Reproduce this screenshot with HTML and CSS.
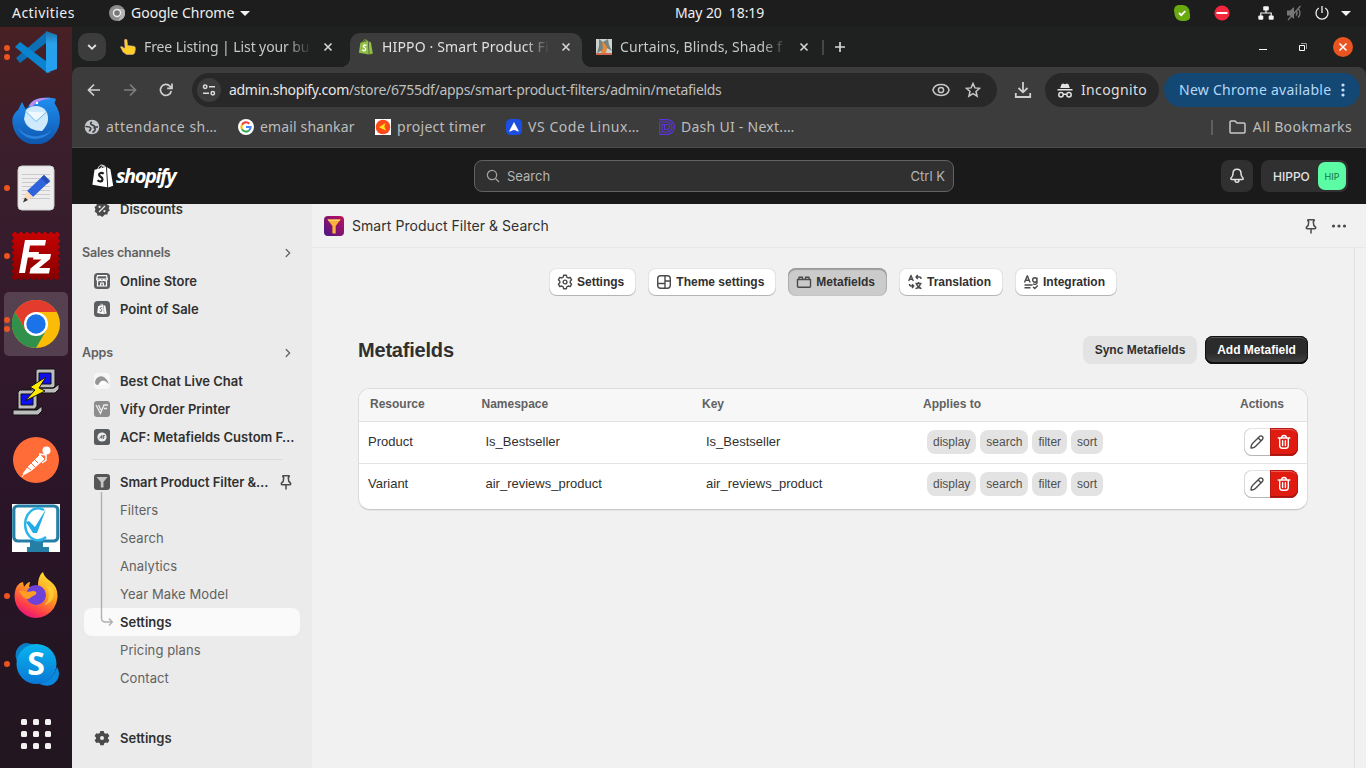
FILE: index.html
```html
<!DOCTYPE html>
<html lang="en">
<head>
<meta charset="utf-8">
<title>HIPPO · Smart Product Filter</title>
<link rel="stylesheet" href="styles.css">
</head>
<body>
<svg class="defs" aria-hidden="true">
  <defs>
    <linearGradient id="gvs" x1="0" y1="0" x2="0" y2="1"><stop offset="0" stop-color="#1c6ea6"/><stop offset=".3" stop-color="#2aa2ea"/><stop offset="1" stop-color="#24a0f0"/></linearGradient>
    <linearGradient id="gtb" x1="0" y1="0" x2="0" y2="1"><stop offset="0" stop-color="#1f8ff0"/><stop offset="1" stop-color="#0e56ae"/></linearGradient>
    <linearGradient id="gff" x1=".8" y1="0" x2=".3" y2="1"><stop offset="0" stop-color="#ffe83a"/><stop offset=".45" stop-color="#ff9a1f"/><stop offset=".8" stop-color="#ff3b4c"/><stop offset="1" stop-color="#e3127f"/></linearGradient>
    <linearGradient id="gsk" x1="0" y1="0" x2="0" y2="1"><stop offset="0" stop-color="#08b4ee"/><stop offset="1" stop-color="#0a78d6"/></linearGradient>
    <linearGradient id="gfl" x1="0" y1="1" x2="1" y2="0"><stop offset="0" stop-color="#4a1585"/><stop offset="1" stop-color="#c1125c"/></linearGradient>
    <linearGradient id="gfz" x1="0" y1="0" x2="0" y2="1"><stop offset="0" stop-color="#c60202"/><stop offset="1" stop-color="#850000"/></linearGradient>
    <symbol id="pin" viewBox="0 0 16 16"><path d="M5.200 1.700h5.600c.5 0 .6.5.4.8l-.9 1.300.5 3.600 1.700 1.700c.5.7.2 1.700-.8 1.700H4.300c-1 0-1.300-1-.8-1.700l1.700-1.700.5-3.600-.9-1.300c-.2-.4 0-.8.4-.8zM8 11v4" fill="none" stroke="currentColor" stroke-width="1.500" stroke-linejoin="round" stroke-linecap="round"/></symbol>
    <symbol id="chev" viewBox="0 0 10 10"><path d="M3.200 1.500L6.700 5 3.200 8.500" fill="none" stroke="currentColor" stroke-width="1.200" stroke-linecap="round" stroke-linejoin="round"/></symbol>
    <symbol id="x" viewBox="0 0 10 10"><path d="M1.500 1.500l7 7M8.500 1.500l-7 7" stroke="currentColor" stroke-width="1.600"/></symbol>
    <symbol id="bag" viewBox="0 0 22 24"><path d="M2.500 5.800L14 3l1.300 20.300L.4 20.800z" fill="currentColor"/><path d="M15 3.300l3.400 2 2.800 16.400-5 1.700z" fill="currentColor"/><path d="M5.400 7.200C5.800 3.500 7.800.9 9.800 1c1.700 0 2.500 2 2.600 4.500M8.400 6c.4-2.700 1.700-4.400 3.400-4.200 1 .1 1.800 1 2 2" fill="none" stroke="currentColor" stroke-width="1"/><path d="M11.700 9.600c-2-1.200-4.700-.8-4.600 1.200.1 2 3.500 2 3.400 4.600-.1 2.400-3 2.700-5 .9" fill="none" stroke="var(--bag-letter,#1a1a1a)" stroke-width="2.200"/></symbol>
    <symbol id="pencil" viewBox="0 0 16 16"><path d="M2 14c-.1-1.700.3-3.200 1.500-4.400l7-7a2 2 0 0 1 2.900 2.900l-7 7C5.200 13.700 3.700 14.100 2 14zM9.200 4l2.800 2.800" fill="none" stroke="#4a4a4a" stroke-width="1.400" stroke-linejoin="round"/></symbol>
    <symbol id="trash" viewBox="0 0 16 16"><path d="M2.200 4h11.600M5.600 3.800C5.600 2.300 6.600 1.500 8 1.500s2.400.8 2.400 2.300M3.700 4.200v7.300c0 1.700.9 2.700 2.600 2.700h3.400c1.700 0 2.600-1 2.600-2.700V4.200M6.600 6.700v4.800M9.400 6.700v4.800" fill="none" stroke="#fff" stroke-width="1.400" stroke-linecap="round"/></symbol>
  </defs>
</svg>

<header class="topbar">
  <span class="tb-act">Activities</span>
  <svg class="tb-chrome" width="16" height="16" viewBox="0 0 16 16"><circle cx="8" cy="8" r="8" fill="#8d8d8d"/><path d="M8 4h7A8 8 0 0 1 9 16l3-6" fill="#b5b5b5"/><circle cx="8" cy="8" r="3.500" fill="#777" stroke="#eee" stroke-width="1.400"/></svg>
  <span class="tb-app">Google Chrome</span>
  <i class="caret"></i>
  <span class="tb-clock">May 20&nbsp; 18:19</span>
  <div class="tb-tray">
    <svg width="16" height="16" viewBox="0 0 16 16"><path d="M5 0h4a7 7 0 0 1 6.500 8 5 5 0 0 1-4 8H8A7.500 7.500 0 0 1 .5 8C-1 4 1 0 5 0z" fill="#67a90f"/><path d="M5 8l2.300 2.200L11.300 6" fill="none" stroke="#fff" stroke-width="1.800"/></svg>
    <svg width="16" height="16" viewBox="0 0 16 16"><circle cx="8" cy="8" r="7.600" fill="#f4263e"/><rect x="2.500" y="7" width="11" height="2" fill="#fff"/></svg>
    <svg width="16" height="16" viewBox="0 0 16 16" fill="#f4f4f4"><rect x="5.200" y="1.200" width="5.600" height="4.200" rx="1"/><rect x=".3" y="10.600" width="5" height="4.200" rx="1"/><rect x="10.700" y="10.600" width="5" height="4.200" rx="1"/><path d="M8 5v3M2.800 11V8h10.400v3" fill="none" stroke="#f4f4f4" stroke-width="1.200"/></svg>
    <svg width="16" height="16" viewBox="0 0 16 16"><path d="M1 5.500h3L8 2v12l-4-3.500H1z" fill="#777"/><path d="M10 5.500c1.300 1.500 1.300 3.500 0 5M12 3.500c2.700 2.500 2.700 6.500 0 9M2 15L14.500 1" fill="none" stroke="#777" stroke-width="1.300"/></svg>
    <svg width="16" height="16" viewBox="0 0 16 16"><path d="M8 1v7M4.800 3a6 6 0 1 0 6.400 0" fill="none" stroke="#f0f0f0" stroke-width="1.300"/></svg>
    <i class="caret"></i>
  </div>
</header>

<div class="desktop">
  <nav class="dock">
    <div class="app run2"><svg width="48" height="48" viewBox="0 0 48 48"><path d="M34 4L4 30l4 5 26-20z" fill="#0d6fb5"/><path d="M8 14L38 36v9L34 44 3 19z" fill="#0a84cf"/><path d="M34 3l11 4v34l-11 4z" fill="url(#gvs)"/></svg></div>
    <div class="app"><svg width="48" height="48" viewBox="0 0 48 48"><path d="M16 11C21 1 35 0 44 3c-1 3-2 4-1 5 7 10 6 22 0 30A23 23 0 0 1 1 30C-1 22 2 17 6 14l4-8c3 5 3 9 6 5z" fill="url(#gtb)"/><path d="M17 10c4-8 14-9 22-7-9 0-15 3-19 8z" fill="#b58cf0"/><path d="M5 31c8 10 23 13 35 3-7 10-25 15-35-3z" fill="#46a6ff" opacity=".5"/><path d="M14 14c6-6 16-5 20 1 4 7 2 14-4 20-8 0-16-3-18-12z" fill="#cfe9fd"/><path d="M14 15.500l10 10 10-9" fill="#eef8ff" stroke="#70b5ef"/><circle cx="25" cy="7" r="1.200" fill="#fff"/></svg></div>
    <div class="app run1"><svg width="48" height="48" viewBox="0 0 48 48"><rect x="6" y="2" width="36" height="44" rx="4" fill="#ededed" stroke="#cfcfcf"/><path d="M10 10.500h28M10 14.500h28M10 18.500h28M10 22.500h28M10 26.500h28M10 30.500h28M10 34.500h28" stroke="#cacaca"/><path d="M15 27L32 11l6 6-17 16z" fill="#2e63dc"/><path d="M32 11l6 6-3 3-6-6z" fill="#254fb8"/><path d="M15 27l6 6-10 5z" fill="#ffd9ba"/><path d="M13 33.500l3 2.500-5 2.500z" fill="#333"/></svg></div>
    <div class="app run1"><svg width="48" height="48" viewBox="0 0 48 48"><rect width="48" height="48" fill="url(#gfz)"/><rect width="48" height="48" fill="none" stroke="#331a2c" stroke-width="3.600" stroke-dasharray="0 6" stroke-linecap="round"/><path d="M7 41L13 8h21l-1 5.500H18L16.800 20H27l-1 5.500H15.800L13 41zM22 22h17l-1 5-11 9h11l-1 5.500H17.500l1-5 11-9H21z" fill="#fff"/></svg></div>
    <div class="app run2 current"><svg width="48" height="48" viewBox="0 0 48 48"><circle cx="24" cy="24" r="24" fill="#fbbc08"/><path d="M3.200 12A24 24 0 0 1 44.800 12H24z" fill="#e33b2e"/><path d="M3.200 12A24 24 0 0 0 24 48l10.400-18L24 36 13.600 30z" fill="#31914a"/><path d="M3.200 12L13.600 30 24 12z" fill="#e33b2e"/><circle cx="24" cy="24" r="12" fill="#fff"/><circle cx="24" cy="24" r="9.700" fill="#1a73e8"/></svg></div>
    <div class="app"><svg width="48" height="48" viewBox="0 0 48 48"><g stroke="#111" stroke-width="1"><path d="M24 2l2-1h17v17l-2 2H24zM19 20h23l5-4v5l-4 4H19z" fill="#bdbdbd"/><path d="M27 5h12v11H27z" fill="#1010ef"/><path d="M6 24l2-2h17v16l-2 3H6zM1 42h24l5-4v5l-4 4H1z" fill="#bdbdbd"/><path d="M9 26h12v11H9z" fill="#1010ef"/><path d="M34 9L18 19l5 3-10 11 20-10-6-3z" fill="#ffec00"/></g></svg></div>
    <div class="app"><svg width="48" height="48" viewBox="0 0 48 48"><circle cx="24" cy="24" r="23" fill="#ff6c37"/><path d="M11 38l5-7 12-12 4 4-12 11-7 4zM12 38l-2 3" fill="#fff" stroke="#fff" stroke-width="1"/><path d="M15 31l4 3M19 27l4 4M23 24l3 3" stroke="#ff6c37"/><circle cx="34.500" cy="14.500" r="4" fill="#fff"/><path d="M31 14l6 2M27 18l7 1v5l-4 3" fill="none" stroke="#fff" stroke-width="1.500"/></svg></div>
    <div class="app"><svg width="48" height="48" viewBox="0 0 48 48"><rect width="48" height="48" fill="#fff"/><rect x="1.800" y="2" width="44" height="35" rx="4" fill="none" stroke="#257ea5" stroke-width="3.200"/><path d="M18 38h13v5h6v5H15v-5h3z" fill="#257ea5"/><path d="M32 6A13 16 0 1 0 34 33" fill="none" stroke="#2eb3e8" stroke-width="2.500"/><path d="M14 18l3-1 6 6L34 5l-9 24h-4z" fill="#22abe4"/></svg></div>
    <div class="app run1"><svg width="48" height="48" viewBox="0 0 48 48"><path d="M5 14l3-3 3-1 1 5c2-3 4-5 6-5l-1 5 9-1c0-7 2-12 5-14 2 8 9 8 13 16A22 22 0 0 1 24 46 22 22 0 0 1 5 14z" fill="url(#gff)"/><circle cx="24" cy="23" r="10" fill="#6d42d8"/><path d="M7 19c5-1 8 2 14 0 4 0 5 3 0 5-4 2-4 5-10 1z" fill="#ff9d25"/><path d="M34 14c5 7 3 16-2 19 9-2 12-10 8-18z" fill="#ffd037" opacity=".8"/></svg></div>
    <div class="app run1"><svg width="48" height="48" viewBox="0 0 48 48"><path d="M14 3A12 12 0 0 0 4 18l4 14C4 18 12 6 26 5z" fill="#087fc8"/><circle cx="24.500" cy="24" r="20" fill="url(#gsk)"/><path d="M45 27a12 12 0 0 1-14 18l-4-1c10-2 15-8 18-17z" fill="#0b87dd"/><text x="24" y="35" text-anchor="middle" class="skype-s">S</text></svg></div>
    <div class="app apps"><span class="dots"><i></i><i></i><i></i><i></i><i></i><i></i><i></i><i></i><i></i></span></div>
  </nav>

  <main class="window">
    <div class="tabstrip">
      <span class="tab-menu"><svg width="12" height="12" viewBox="0 0 12 12"><path d="M2.200 4L6 7.800 9.800 4" fill="none" stroke="#e3e3e3" stroke-width="1.800"/></svg></span>
      <div class="tab t1"><svg width="16" height="16" viewBox="0 0 16 16"><path d="M4.500 1c0-1 2.500-1 2.500 0l.6 5.500 6 .7c2.500.4 2 3 1 7L13 15.500H6.500L3 13 .5 8c1-1 2.500 0 3.500 1.300L5 9z" fill="#ffcf24" stroke="#eab" stroke-opacity=".5"/></svg><span class="title w1">Free Listing | List your bu</span><svg class="cls" width="10" height="10"><use href="#x"/></svg></div>
      <div class="tab t2"><svg width="16" height="16" viewBox="0 0 22 24" class="green-bag"><use href="#bag"/></svg><span class="title w2">HIPPO · Smart Product Fi</span><svg class="cls" width="10" height="10"><use href="#x"/></svg></div>
      <div class="tab t3"><svg width="16" height="16" viewBox="0 0 16 16"><rect width="16" height="16" fill="#ccd1cf"/><path d="M3 0l4 3 5-3 1 6 3 6-5-3-2 4-4-1-4 2 2-7z" fill="#75827f"/><path d="M6 3l3 2 2 3-1 6H5l2-5z" fill="#e78b35"/><path d="M0 15h16" stroke="#c42" stroke-width="1.500"/></svg><span class="title w3">Curtains, Blinds, Shade f</span><svg class="cls" width="10" height="10"><use href="#x"/></svg></div>
      <i class="tsep"></i>
      <svg class="plus" width="12" height="12" viewBox="0 0 12 12"><path d="M6 1v10M1 6h10" stroke="#d5d5d5" stroke-width="1.700"/></svg>
      <div class="wctl"><i class="min"></i><svg width="8" height="8" viewBox="0 0 8 8"><path d="M.5 2.500h5v5h-5z" fill="none" stroke="#fff"/><path d="M2 .5h5.500V6" fill="none" stroke="#999"/></svg><span class="wclose"><svg width="10" height="10"><use href="#x" width="10" height="10"/></svg></span></div>
    </div>

    <div class="toolbar">
      <svg class="ic back" width="16" height="16" viewBox="0 0 16 16"><path d="M14 8H3M8 2.500L2.500 8 8 13.500" fill="none" stroke="#d0d0d0" stroke-width="1.700"/></svg>
      <svg class="ic fwd" width="16" height="16" viewBox="0 0 16 16"><path d="M2 8h11M8 2.500L13.500 8 8 13.500" fill="none" stroke="#7e7e7e" stroke-width="1.700"/></svg>
      <svg class="ic rel" width="16" height="16" viewBox="0 0 16 16"><path d="M13.300 9A5.500 5.500 0 1 1 12 4.200L13.500 6M14 1.500V6.300H9.200" fill="none" stroke="#d0d0d0" stroke-width="1.700"/></svg>
      <div class="omni">
        <span class="tune"><svg width="14" height="12" viewBox="0 0 14 12"><g fill="none" stroke="#dcdcdc" stroke-width="1.500"><circle cx="3.200" cy="2.800" r="1.700"/><path d="M7 2.800h6M1 9.200h6"/><circle cx="10.800" cy="9.200" r="1.700"/></g></svg></span>
        <span class="url"><b>admin.shopify.com</b>/store/6755df/apps/smart-product-filters/admin/metafields</span>
        <svg class="eye" width="18" height="14" viewBox="0 0 18 14"><path d="M.9 7C3-.2 15-.2 17.100 7 15 14.200 3 14.200.9 7z" fill="none" stroke="#c8c8c8" stroke-width="1.500"/><circle cx="9" cy="7" r="2.600" fill="none" stroke="#c8c8c8" stroke-width="1.500"/></svg>
        <svg width="16" height="16" viewBox="0 0 16 16"><path d="M8 1.500l1.900 4.400 4.700.4-3.600 3.100 1.100 4.700L8 11.600l-4.100 2.500L5 9.400 1.400 6.300l4.700-.4z" fill="none" stroke="#c8c8c8" stroke-width="1.500"/></svg>
      </div>
      <svg class="dl" width="18" height="16" viewBox="0 0 18 16"><path d="M9 0v10M4.500 6L9 10.300 13.500 6M1.800 11v4h14.400v-4" fill="none" stroke="#cfcfcf" stroke-width="1.800"/></svg>
      <div class="incog"><svg width="16" height="15" viewBox="0 0 16 15"><path d="M4.500 1.200L6 .5l2 .7 2-.7 1.500.7L12.800 5H3.200zM.5 6h15v1.500H.5z" fill="#e3e3e3"/><g fill="none" stroke="#e3e3e3" stroke-width="1.500"><circle cx="4" cy="11.700" r="2.200"/><circle cx="12" cy="11.700" r="2.200"/><path d="M6 11.300h4"/></g></svg><span>Incognito</span></div>
      <div class="newc"><span>New Chrome available</span><svg width="4" height="14" viewBox="0 0 4 14" fill="#c5e1fb"><circle cx="2" cy="2" r="1.600"/><circle cx="2" cy="7" r="1.600"/><circle cx="2" cy="12" r="1.600"/></svg></div>
    </div>

    <div class="bookmarks">
      <span class="bm b1"><svg width="16" height="16" viewBox="0 0 16 16"><circle cx="8" cy="8" r="7.300" fill="#c3c6cb"/><path d="M1.500 7.500c3 0 5 .3 5.300 2 .2 1.200-1.300 1.500-1.300 3" fill="none" stroke="#3c3c3c" stroke-width="1.600"/><path d="M8 3c-1.500.5-2 2-.5 2.700 1.500.5 2.500.3 3 2l3.500.3M9.500 8.500c1.500.5 2.500 2 1 3.500l-2 1.500" fill="none" stroke="#3c3c3c" stroke-width="1.600"/></svg><span>attendance sh…</span></span>
      <span class="bm b2"><svg width="16" height="16" viewBox="0 0 16 16"><circle cx="8" cy="8" r="8" fill="#fff"/><g fill="none" stroke-width="2.100"><path d="M11.300 4.700A4.600 4.600 0 0 0 4 5.700" stroke="#ea4335"/><path d="M4 5.700a4.600 4.600 0 0 0 0 4.600" stroke="#fbbc05"/><path d="M4 10.300a4.600 4.600 0 0 0 7 1.200" stroke="#34a853"/><path d="M8 8h4.600c0 1.500-.6 2.700-1.600 3.500" stroke="#4285f4"/></g></svg><span>email shankar</span></span>
      <span class="bm b3"><svg width="16" height="16" viewBox="0 0 16 16"><rect width="16" height="16" fill="#fff"/><circle cx="8" cy="8" r="7.300" fill="#fb4a18"/><path d="M4 8.300L10.500 4 9.300 7.600l1.700 4z" fill="#fde51c"/></svg><span>project timer</span></span>
      <span class="bm b4"><svg width="16" height="16" viewBox="0 0 16 16"><rect width="16" height="16" rx="4.500" fill="#1a4fe0"/><path d="M8 3l5 9.500c-2 .5-3-1.500-5-1.500s-3 2-5 1.500z" fill="#fff"/></svg><span>VS Code Linux…</span></span>
      <span class="bm b5"><svg width="16" height="16" viewBox="0 0 16 16"><path d="M0 .6h8a7.400 7.400 0 0 1 0 14.800H.6V4M0 3h8a5 5 0 0 1 0 10H3V5.500h5a2.500 2.500 0 0 1 0 5H5.500V6" fill="none" stroke="#5b35d5" stroke-width="1.200"/></svg><span>Dash UI - Next.…</span></span>
      <i class="bsep"></i>
      <span class="bm ball"><svg width="17" height="14" viewBox="0 0 17 14"><path d="M1 2.200C1 1.500 1.500 1 2.200 1H6l2 2h6.800c.7 0 1.200.5 1.200 1.200v7.600c0 .7-.5 1.200-1.200 1.200H2.200C1.500 13 1 12.500 1 11.800z" fill="none" stroke="#c8c8c8" stroke-width="1.500"/></svg><span>All Bookmarks</span></span>
    </div>

    <div class="shop-head">
      <svg class="logo-bag" width="22" height="24"><use href="#bag"/></svg><span class="wordmark">shopify</span>
      <div class="search"><svg width="14" height="14" viewBox="0 0 14 14"><circle cx="6" cy="6" r="4.600" fill="none" stroke="#a5a5a5" stroke-width="1.200"/><path d="M9.500 9.500L13 13" stroke="#a5a5a5" stroke-width="1.200"/></svg><span>Search</span><span class="kbd">Ctrl K</span></div>
      <div class="bell"><svg width="16" height="16" viewBox="0 0 16 16"><path d="M8 1.200c-2.500 0-4 1.800-4 4.200 0 2.500-.7 3.200-1.900 4.500-.6.800-.2 1.700.7 1.700h10.400c.9 0 1.300-.9.700-1.700C12.700 8.600 12 7.900 12 5.400c0-2.400-1.500-4.200-4-4.200zM6 12c0 1.400.9 2.300 2 2.300s2-.9 2-2.300" fill="none" stroke="#e3e3e3" stroke-width="1.500"/></svg></div>
      <div class="store"><span>HIPPO</span><b class="avatar">HIP</b></div>
    </div>

    <div class="admin">
      <aside class="side">
        <a class="item first"><svg width="16" height="16" viewBox="0 0 16 16"><path d="M8 0l2 1.600 2.500-.4.700 2.400L15.500 5l-.8 2.300 1.100 2.200-2 1.500-.3 2.500-2.600.1L8.300 16l-2.200-1.400-2.600.1-.6-2.500L.7 10.800l.7-2.500L.5 6l2-1.500L3 2l2.600.1z" fill="#4a4a4a"/><path d="M5 11l6-6" stroke="#ebebeb" stroke-width="1.300"/><circle cx="5.600" cy="5.900" r="1.100" fill="#ebebeb"/><circle cx="10.400" cy="10.100" r="1.100" fill="#ebebeb"/></svg><span>Discounts</span></a>
        <div class="sec"><span>Sales channels</span><svg width="10" height="10"><use href="#chev"/></svg></div>
        <a class="item"><svg width="16" height="16" viewBox="0 0 16 16"><rect width="16" height="16" rx="3.500" fill="#5c5f62"/><path d="M3.500 2.700h9l.8 3.300H2.700zM3.500 8v5h9V8M6.700 13v-3h2.600v3M2.700 6c0 2.400 3.500 2.400 3.500 0 0 2.400 3.600 2.400 3.600 0 0 2.400 3.500 2.400 3.500 0" fill="none" stroke="#fff" stroke-width="1.200"/></svg><span>Online Store</span></a>
        <a class="item"><svg width="16" height="16" viewBox="0 0 16 16" class="pos"><rect width="16" height="16" rx="3.500" fill="#5c5f62"/><use href="#bag" x="3" y="2" width="10" height="12"/></svg><span>Point of Sale</span></a>
        <div class="sec"><span>Apps</span><svg width="10" height="10"><use href="#chev"/></svg></div>
        <a class="item"><svg width="16" height="16" viewBox="0 0 16 16"><rect width="16" height="16" rx="3.500" fill="#f6f6f6"/><path d="M1 9c1-5 5-7 9-5l3 3 2 4-4-3c-3-1-4 1-7 4-2 0-3-1-3-3z" fill="#949494"/><path d="M5 11c2-4 5-4 7-1-2 3-5 3-7 1z" fill="#fff"/></svg><span>Best Chat Live Chat</span></a>
        <a class="item"><svg width="16" height="16" viewBox="0 0 16 16"><rect width="16" height="16" rx="3" fill="#8c8c8c"/><path d="M2 4l4.500 8.500L10 4h4M4.500 4l2.300 5M10 7.500h3" fill="none" stroke="#eee" stroke-width="1.300"/></svg><span>Vify Order Printer</span></a>
        <a class="item"><svg width="16" height="16" viewBox="0 0 16 16"><rect width="16" height="16" rx="2.500" fill="#5a5d60"/><circle cx="8" cy="8" r="4.600" fill="#eee"/><path d="M5.500 9.500l2.200-3v3M10.800 6.500H9.200v3.500M9.200 8h1.300" fill="none" stroke="#5a5d60" stroke-width="1"/></svg><span>ACF: Metafields Custom F…</span></a>
        <hr>
        <a class="item"><svg width="16" height="16" viewBox="0 0 16 16"><rect width="16" height="16" rx="3" fill="#555"/><path d="M2.500 3h11l-4 5v5.500H6.800V8z" fill="#c4c4c4"/></svg><span class="cur">Smart Product Filter &amp;…</span><svg class="pin" width="16" height="16"><use href="#pin"/></svg></a>
        <div class="subs">
          <svg class="branch" width="14" height="142" viewBox="0 0 14 142"><path d="M1.500 0v126c0 3 1.500 4 4 4h6M9 126.500l3.300 3.500L9 133.500" fill="none" stroke="#b0b0b0" stroke-width="1.400"/></svg>
          <a class="sub">Filters</a><a class="sub">Search</a><a class="sub">Analytics</a><a class="sub">Year Make Model</a><a class="sub on">Settings</a><a class="sub">Pricing plans</a><a class="sub">Contact</a>
        </div>
        <a class="item last"><svg width="16" height="16" viewBox="0 0 16 16"><path d="M6.300 1h3.400l.5 2 1.500.8 2-.6 1.700 2.900L14 7.500v1.300l1.400 1.400-1.700 2.900-2-.6-1.500.8-.5 2H6.300l-.5-2-1.500-.8-2 .6L.6 10.200 2 8.700V7.500L.6 6.100l1.700-2.900 2 .6L5.800 3z" fill="#4a4a4a"/><circle cx="8" cy="8.100" r="2" fill="#ebebeb"/></svg><span>Settings</span></a>
      </aside>

      <section class="frame">
        <div class="titlebar">
          <svg width="20" height="20" viewBox="0 0 20 20"><rect width="20" height="20" rx="4" fill="url(#gfl)"/><path d="M3.500 3.500h13L11.700 10v7.500H8.400V10z" fill="#fbb23c"/><path d="M3.500 3.500h13l-1 1.600h-11z" fill="#ffd45e"/></svg>
          <span>Smart Product Filter &amp; Search</span>
          <svg class="pin" width="16" height="16"><use href="#pin"/></svg>
          <svg width="16" height="4" viewBox="0 0 16 4" fill="#4a4a4a"><circle cx="2.500" cy="2" r="1.600"/><circle cx="8" cy="2" r="1.600"/><circle cx="13.500" cy="2" r="1.600"/></svg>
        </div>
        <div class="page">
          <div class="tabs">
            <span class="btn"><svg width="16" height="16" viewBox="0 0 16 16"><path d="M6.600 1.300h2.800l.4 1.900 1.500.8 1.900-.6 1.400 2.400L13.200 7.200v1.600l1.400 1.400-1.400 2.400-1.900-.6-1.500.8-.4 1.900H6.600l-.4-1.900-1.500-.8-1.900.6-1.400-2.400 1.400-1.400V7.200L1.400 5.800l1.400-2.400 1.900.6 1.500-.8z"/><circle cx="8" cy="8" r="1.900"/></svg>Settings</span>
            <span class="btn"><svg width="16" height="16" viewBox="0 0 16 16"><rect x="1.700" y="1.700" width="12.600" height="12.600" rx="3"/><path d="M9 1.700v12.600M9 7h5.300M1.700 9.500H9"/></svg>Theme settings</span>
            <span class="btn active"><svg width="16" height="16" viewBox="0 0 16 16"><path d="M1.500 5.500h13v6.800c0 .5-.4.900-.9.900H2.400c-.5 0-.9-.4-.9-.9zM3 5.300V3.200h3.500v2.100M9.500 5.300V3.200H13v2.100"/></svg>Metafields</span>
            <span class="btn"><svg width="16" height="16" viewBox="0 0 16 16"><path d="M1.700 7L4 1.500 6.300 7M2.500 5.300h3M9 3h3.500c1 0 1.500.7 1.500 2M10.800 1L9 3l1.800 2M6.500 12H4c-1 0-1.500-.7-1.500-2M5 10.200L6.800 12 5 14M8.500 9.500h6M11.500 8v1.500M13.500 9.500c-.8 3-2.500 4.500-5 5.200M9.500 10c.8 2.200 2.500 4 5 4.700"/></svg>Translation</span>
            <span class="btn"><svg width="16" height="16" viewBox="0 0 16 16"><path d="M1.500 8.500L4.300 1.800l2.800 6.700M2.500 6.300h3.700M14 3.500V9c0 1.500-3 1.700-4 .8M14 6a2.200 2.200 0 1 1-4.400 0A2.200 2.200 0 0 1 14 6zM1.500 11h8M1.500 13.800h6M10 13l1.800 1.600 3-3"/></svg>Integration</span>
          </div>
          <div class="headline"><h1>Metafields</h1><span class="sync">Sync Metafields</span><span class="add">Add Metafield</span></div>
          <div class="card">
            <div class="row head"><span>Resource</span><span>Namespace</span><span>Key</span><span>Applies to</span><span>Actions</span></div>
            <div class="row"><span>Product</span><span>Is_Bestseller</span><span>Is_Bestseller</span><span class="tags"><i>display</i><i>search</i><i>filter</i><i>sort</i></span><span class="acts"><b class="edit"><svg width="16" height="16"><use href="#pencil"/></svg></b><b class="del"><svg width="16" height="16"><use href="#trash"/></svg></b></span></div>
            <div class="row"><span>Variant</span><span>air_reviews_product</span><span>air_reviews_product</span><span class="tags"><i>display</i><i>search</i><i>filter</i><i>sort</i></span><span class="acts"><b class="edit"><svg width="16" height="16"><use href="#pencil"/></svg></b><b class="del"><svg width="16" height="16"><use href="#trash"/></svg></b></span></div>
          </div>
        </div>
      </section>
    </div>
  </main>
</div>
</body>
</html>
```

FILE: styles.css
```css
* { box-sizing: border-box; }
html, body { height: 100%; overflow: hidden; }
body { margin: 0; display: flex; flex-direction: column; background: #1d1d1d; font-family: "Noto Sans", "Open Sans", sans-serif; color: #c7c7c7; white-space: nowrap; }
svg { flex: none; display: block; }
.defs { position: absolute; width: 0; height: 0; }

/* desktop bar */
.topbar { height: 27px; flex: none; background: #1d1d1d; display: flex; align-items: center; color: #efefef; font-size: 14px; line-height: 20px; padding: 0 0 1px 12px; }
.tb-act { width: 97px; letter-spacing: .45px; }
.tb-app { margin-left: 6px; width: 104px; letter-spacing: 0; }
.caret { border: 5px solid transparent; border-top-color: #f2f2f2; border-bottom: 0; margin-left: 5px; }
.tb-clock { margin-left: 425px; letter-spacing: -.1px; }
.tb-tray { margin-left: auto; display: flex; align-items: center; padding-right: 15px; }
.tb-tray svg + svg { margin-left: 12px; }
.tb-tray svg:nth-child(2) { margin-left: 24px; }
.tb-tray svg:nth-child(3) { margin-left: 28px; }
.tb-tray .caret { margin-left: 11px; }

.desktop { flex: 1; min-height: 0; display: flex; }
.dock { width: 72px; flex: none; overflow: hidden; background: linear-gradient(#482024 0, #3a1e2b 17%, #331a2d 40%, #2a1428 65%, #21161f 100%); }
.app { height: 68px; width: 72px; display: flex; align-items: center; justify-content: center; position: relative; }
.app:first-child { margin-top: -9px; }
.app.apps { margin-top: 2px; }
.app.run1::before, .app.run2::before { content: ""; position: absolute; left: 4px; top: 31px; width: 6px; height: 6px; border-radius: 50%; background: #e95420; }
.app.run2::before { top: 27px; box-shadow: 0 9px 0 #e95420; }
.app.current::after { content: ""; position: absolute; left: 4px; top: 2px; width: 64px; height: 64px; border-radius: 5px; background: rgba(255,255,255,.17); }
.app.current svg { z-index: 1; }
.app.current::before { z-index: 1; }
.skype-s { font: 700 32px "Open Sans", sans-serif; fill: #fff; }
.dots { display: grid; grid-template-columns: repeat(3, 6px); gap: 6px; }
.dots i { width: 6px; height: 6px; border-radius: 1.5px; background: #f3f1f0; }

.window { flex: 1; min-width: 0; display: flex; flex-direction: column; }
/* tab strip */
.tabstrip { height: 46px; margin-bottom: -6px; padding-bottom: 6px; flex: none; background: #1f2120; display: flex; align-items: center; padding-left: 6px; font-size: 14px; }
.tab-menu { width: 28px; height: 28px; border-radius: 10px; background: #3c3c3c; display: grid; place-items: center; }
.tab { display: flex; align-items: center; height: 34px; margin-top: 6px; padding-bottom: 6px; }
.t1 { margin-left: 14px; }
.t2 { margin-left: 17px; padding-left: 8px; width: 232px; background: #3c3c3c; border-radius: 10px 10px 0 0; position: relative; color: #e0e0e0; }
.t2::before, .t2::after { content: ""; position: absolute; bottom: 0; width: 10px; height: 10px; left: -10px; background: radial-gradient(circle at 0 0, transparent 10px, #3c3c3c 10.5px); }
.t2::after { left: auto; right: -10px; background: radial-gradient(circle at 100% 0, transparent 10px, #3c3c3c 10.5px); }
.t3 { margin-left: 14px; }
.title { margin: -1px 0 0 8px; width: 168px; -webkit-mask-image: linear-gradient(90deg, #000 142px, transparent 168px); mask-image: linear-gradient(90deg, #000 142px, transparent 168px); }
.w1 { letter-spacing: -.1px; } .w2 { letter-spacing: .15px; } .w3 { letter-spacing: .1px; }
.cls { margin-left: 11px; color: #d6d6d6; }
.tsep { width: 2px; height: 15px; background: #444746; margin-left: 13px; }
.plus { margin-left: 10px; }
.wctl { margin-left: auto; display: flex; align-items: center; padding-right: 13px; }
.min { width: 8px; height: 1px; background: #fff; margin: 5px 32px 0 0; }
.wclose { width: 20px; height: 20px; margin-left: 26px; border-radius: 50%; background: #e95420; color: #fff; display: grid; place-items: center; }
.green-bag { color: #8fbf45; --bag-letter: #fff; }

/* toolbar */
.toolbar { height: 46px; flex: none; background: #3c3c3c; display: flex; align-items: center; border-radius: 8px 8px 0 0; padding-left: 14px; position: relative; }
.toolbar span { margin-top: -1px; }
.fwd { margin-left: 20px; } .rel { margin-left: 20px; }
.omni { margin-left: 18px; width: 805px; height: 34px; border-radius: 17px; background: #282828; display: flex; align-items: center; padding: 0 16px 0 5px; }
.toolbar .tune { width: 24px; height: 24px; margin-top: 0; border-radius: 50%; background: #3c3c3c; display: grid; place-items: center; }
.url { flex: 1; margin-left: 8px; font-size: 14px; letter-spacing: -.3px; color: #bfbfbf; }
.url b { font-weight: 400; color: #e6e6e6; }
.eye { margin-right: 15px; }
.dl { margin-left: 17px; }
.incog { margin-left: 13px; width: 114px; height: 34px; border-radius: 17px; background: #282828; display: flex; align-items: center; padding-left: 12px; color: #dedede; font-size: 14px; letter-spacing: .35px; }
.incog span { margin-left: 8px; }
.newc { margin-left: 5px; width: 196px; height: 34px; border-radius: 17px; background: #134774; display: flex; align-items: center; justify-content: space-between; padding: 0 15px; color: #b5d9f8; font-size: 14px; letter-spacing: .27px; }

/* bookmarks */
.bookmarks { height: 35px; flex: none; background: #3c3c3c; border-bottom: 1px solid #4c4c4c; display: flex; align-items: center; padding: 0 14px 6px 12px; font-size: 14px; color: #bdbdbd; }
.bm { display: flex; align-items: center; }
.bm span { margin-top: -2px; }
.bm svg + span { margin-left: 6px; }
.b1 { width: 154px; letter-spacing: .5px; } .b2 { width: 137px; letter-spacing: .15px; } .b3 { width: 131px; letter-spacing: .3px; } .b4 { width: 153px; letter-spacing: .55px; } .b5 { letter-spacing: .27px; }
.bsep { margin-left: auto; width: 2px; height: 15px; background: #5f5f5f; margin-right: 16px; }
.bm.ball { letter-spacing: .38px; }
.bm.ball svg + span { margin-left: 7px; }

/* admin header */
.shop-head { height: 56px; flex: none; background: #1a1a1a; display: flex; align-items: center; padding: 0 18px 0 20px; font-family: Inter, sans-serif; font-size: 13px; color: #b5b5b5; }
.logo-bag { color: #fff; }
.wordmark { font: italic 700 20px/24px "Open Sans", sans-serif; color: #fff; margin-left: 2px; width: 64px; letter-spacing: -1.4px; }
.search { margin-left: 294px; width: 480px; height: 32px; border: 1px solid #616161; border-radius: 8px; background: #303030; display: flex; align-items: center; padding: 0 8px 0 11px; }
.search svg + span { margin-left: 7px; }
.kbd { margin-left: auto; }
.bell { margin-left: auto; width: 32px; height: 32px; border-radius: 8px; background: #303030; display: grid; place-items: center; }
.store { margin-left: 8px; width: 87px; height: 32px; border-radius: 8px; background: #303030; display: flex; align-items: center; justify-content: space-between; padding: 0 2px 0 12px; font-size: 12px; color: #e3e3e3; font-weight: 500; }
.avatar { width: 28px; height: 28px; border-radius: 7px; background: #5bfca3; color: #16724a; font-weight: 400; font-size: 9px; display: grid; place-items: center; }

/* sidebar */
.admin { flex: 1; min-height: 0; display: flex; }
.side { width: 240px; flex: none; background: #ebebeb; overflow: hidden; font: 600 13px/20px Inter, sans-serif; color: #303030; }
.item { height: 28px; display: flex; align-items: center; padding-left: 22px; }
.item span { margin-left: 10px; }
.item .cur { letter-spacing: -.06px; }
.item.first { margin-top: -9px; }
.item .pin { margin-left: auto; margin-right: 18px; color: #4a4a4a; }
.sec { height: 28px; margin-top: 16px; display: flex; align-items: center; justify-content: space-between; padding: 0 19px 0 10px; color: #616161; font-size: 12.5px; letter-spacing: -.17px; }
.pos { color: #fff; --bag-letter: #5c5f62; }
.side hr { border: 0; border-top: 1px solid #d8d8d8; margin: 8px 30px 8px 20px; }
.subs { position: relative; }
.branch { position: absolute; left: 28px; top: -4px; z-index: 1; }
.sub { display: flex; align-items: center; height: 28px; margin: 0 12px; padding-left: 36px; border-radius: 8px; font-weight: 400; letter-spacing: .1px; color: #616161; }
.sub.on { background: #fafafa; font-weight: 600; letter-spacing: 0; color: #303030; }
.item.last { margin-top: 32px; }

/* embedded app */
.frame { flex: 1; min-width: 0; background: #f1f1f1; display: flex; flex-direction: column; }
.titlebar { height: 44px; flex: none; border-bottom: 1px solid #e8e8e8; display: flex; align-items: center; padding: 0 19px 0 12px; font: 400 14px Inter, sans-serif; color: #303030; }
.titlebar span { margin-left: 8px; letter-spacing: .05px; }
.titlebar .pin { margin-left: auto; margin-right: 12px; color: #4a4a4a; }
.page { flex: 1; margin-right: 11px; border-right: 1px solid #e0e0e0; padding: 20px 46px 0; font-family: "Liberation Sans", Arial, sans-serif; color: #303030; }
.tabs { display: flex; justify-content: center; gap: 12px; font-weight: 700; font-size: 12px; }
.btn { height: 28px; display: flex; align-items: center; gap: 4px; padding: 0 12px 0 8px; border-radius: 8px; background: #fff; box-shadow: inset 0 -1px 0 #b5b5b5, inset 1px 0 0 #e3e3e3, inset -1px 0 0 #e3e3e3, inset 0 1px 0 #e6e6e6; }
.btn svg { fill: none; stroke: #4a4a4a; stroke-width: 1.4; stroke-linejoin: round; }
.btn.active { background: #cbcbcb; box-shadow: inset 0 2px 1px rgba(26,26,26,.25), inset 1px 0 1px rgba(26,26,26,.15), inset -1px 0 1px rgba(26,26,26,.15); }
.headline { display: flex; align-items: center; margin-top: 40px; height: 28px; font-size: 12px; font-weight: 700; }
h1 { margin: 0 auto 0 0; font-size: 20px; letter-spacing: -.2px; }
.sync { width: 114px; text-align: center; line-height: 28px; border-radius: 8px; background: #e3e3e3; }
.add { margin-left: 8px; width: 103px; text-align: center; line-height: 28px; border-radius: 8px; color: #fff; background: linear-gradient(#2b2b2b 60%, #444); box-shadow: inset 0 0 0 1px #111, inset 0 2px 0 #555, inset 0 -2px 0 #111; }
.card { margin-top: 24px; height: 122px; border-radius: 12px; background: #fff; overflow: hidden; font-size: 13px; border: 1px solid #dcdcdc; border-bottom-color: #c9c9c9; box-shadow: 0 1px 0 rgba(0,0,0,.05); }
.row { height: 42px; display: grid; grid-template-columns: 117.5px 220.5px 221px 1fr auto; align-items: center; padding: 0 9px 2px; border-top: 1px solid #e3e3e3; }
.row.head { height: 32px; border: 0; background: #f7f7f7; font-size: 12px; font-weight: 700; color: #616161; grid-template-columns: 111.5px 220.5px 221px 1fr auto; padding: 0 23px 2px 11px; }
.tags { display: flex; gap: 4px; }
.tags i { font-style: normal; font-size: 12px; line-height: 24px; padding: 0 6px; border-radius: 8px; background: #e3e3e3; color: #4f4f4f; }
.acts { display: flex; }
.edit, .del { height: 28px; display: grid; place-items: center; }
.edit { width: 26px; border-radius: 8px 0 0 8px; box-shadow: inset 0 -1px 0 #b5b5b5, inset 1px 0 0 #d8d8d8, inset 0 1px 0 #e3e3e3; }
.del { width: 28px; border-radius: 0 8px 8px 0; background: #e01b10; box-shadow: inset 0 0 0 1px #b51a14, inset 0 2px 0 #ef5c50, inset 0 -2px 0 #a01610; }
```
